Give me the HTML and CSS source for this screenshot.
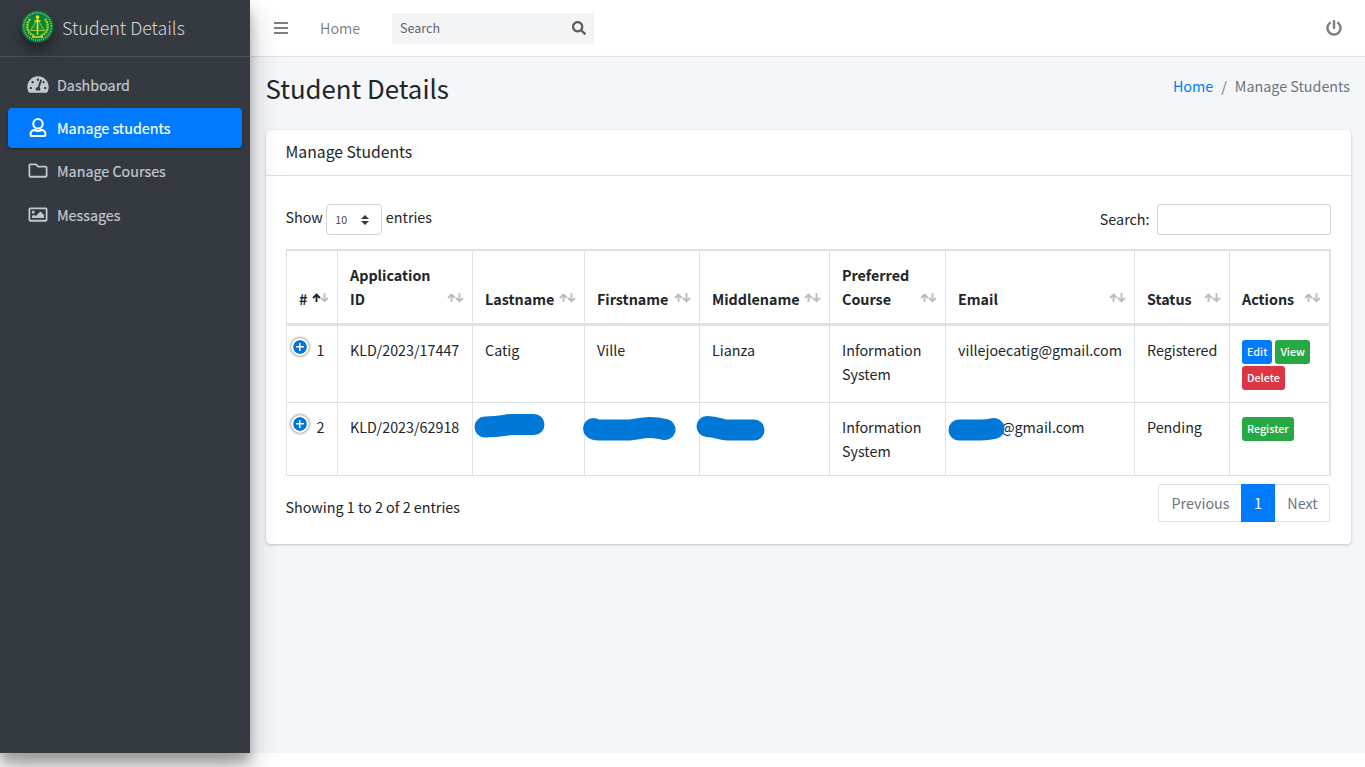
FILE: index.html
```html
<!DOCTYPE html>
<html lang="en">
<head>
<meta charset="utf-8">
<title>Student Details</title>
<link rel="stylesheet" href="styles.css">
</head>
<body>
<svg class="defs" width="0" height="0">
  <symbol id="sort" viewBox="0 0 17 10">
    <path class="up" d="M4.500 9V1.700M1 5L4.500 1.500L8 5" fill="none" stroke-width="1.900"/>
    <path class="down" d="M12.500 0V8M9 5L12.500 8.300L16 5" fill="none" stroke-width="1.900"/>
  </symbol>
</svg>
<div class="wrapper">
  <aside class="sidebar">
    <a class="brand">
      <svg class="logo" viewBox="0 0 33 33">
        <circle cx="16.500" cy="16.500" r="16" fill="#087a35"/>
        <circle cx="16.500" cy="16.500" r="13.700" fill="none" stroke="#8fbf95" stroke-width="1.800" stroke-dasharray="1 1.100"/>
        <circle cx="16.500" cy="16.500" r="11.500" fill="#078535"/>
        <path d="M9 9C4 15 6 24 14 26M24 9C29 15 27 24 19 26" fill="none" stroke="#a7cf24" stroke-width="2.400" stroke-dasharray="2 .6"/>
        <path d="M16.500 9L9.500 20.500H23.500Z" fill="#17913a" stroke="#9cc92a" stroke-width="1"/>
        <path d="M16.500 6V25M13.500 11H19.500M11 27H22" stroke="#e5df28" stroke-width="1.500"/>
        <circle cx="16.500" cy="7" r="1.800" fill="#f1df20"/>
      </svg>
      <span>Student Details</span>
    </a>
    <nav class="menu">
      <a class="item"><svg class="ico" viewBox="0 0 576 512"><path d="M288 32C128.940 32 0 160.940 0 320c0 52.800 14.250 102.260 39.060 144.800 5.610 9.620 16.300 15.200 27.440 15.200h443c11.140 0 21.830-5.580 27.440-15.200C561.750 422.260 576 372.800 576 320c0-159.060-128.940-288-288-288zm0 64c14.710 0 26.580 10.130 30.320 23.650-1.110 2.260-2.640 4.230-3.450 6.670l-9.220 27.670c-5.130 3.490-10.970 6.010-17.640 6.010-17.670 0-32-14.330-32-32S270.330 96 288 96zM96 384c-17.670 0-32-14.330-32-32s14.330-32 32-32 32 14.330 32 32-14.330 32-32 32zm48-160c-17.670 0-32-14.330-32-32s14.330-32 32-32 32 14.330 32 32-14.330 32-32 32zm246.770-72.410l-61.330 184C343.130 347.330 352 364.540 352 384c0 11.720-3.380 22.550-8.880 32H232.880c-5.500-9.450-8.880-20.280-8.880-32 0-33.940 26.500-61.430 59.900-63.590l61.340-184.010c4.170-12.560 17.730-19.450 30.360-15.170 12.570 4.190 19.350 17.790 15.170 30.360zm14.660 57.200l15.520-46.550c3.470-1.290 7.130-2.230 11.050-2.230 17.670 0 32 14.330 32 32s-14.330 32-32 32c-11.380-.01-21.250-6.090-26.570-15.210zM480 384c-17.670 0-32-14.330-32-32s14.330-32 32-32 32 14.330 32 32-14.330 32-32 32z"/></svg><span>Dashboard</span></a>
      <a class="item active"><svg class="ico user" viewBox="0 0 16 18" fill="none" stroke="#fff" stroke-width="2"><circle cx="8" cy="5.500" r="4.500"/><path d="M4.500 11.400C2.200 11.800 1 13.200 1 15.200V16Q1 17 2 17H14Q15 17 15 16V15.200C15 13.200 13.800 11.800 11.500 11.400C9.500 12.400 6.500 12.400 4.500 11.400Z"/></svg><span>Manage students</span></a>
      <a class="item"><svg class="ico" viewBox="0 0 512 512"><path d="M464 128H272l-54.630-54.630c-6-6-14.140-9.370-22.630-9.370H48C21.490 64 0 85.490 0 112v288c0 26.510 21.490 48 48 48h416c26.510 0 48-21.490 48-48V176c0-26.510-21.490-48-48-48zm0 272H48V112h140.120l54.630 54.630c6 6 14.140 9.370 22.630 9.370H464v224z"/></svg><span>Manage Courses</span></a>
      <a class="item messages"><svg class="ico" viewBox="0 0 512 512"><path d="M464 64H48C21.490 64 0 85.490 0 112v288c0 26.510 21.490 48 48 48h416c26.510 0 48-21.490 48-48V112c0-26.510-21.490-48-48-48zm-6 336H54a6 6 0 0 1-6-6V118a6 6 0 0 1 6-6h404a6 6 0 0 1 6 6v276a6 6 0 0 1-6 6zM128 152c-22.091 0-40 17.909-40 40s17.909 40 40 40 40-17.909 40-40-17.909-40-40-40zM96 352h320v-80l-87.515-87.515c-4.686-4.686-12.284-4.686-16.971 0L192 304l-39.515-39.515c-4.686-4.686-12.284-4.686-16.971 0L96 304v48z"/></svg><span>Messages</span></a>
    </nav>
  </aside>
  <div class="main">
    <header class="topbar">
      <svg class="bars" viewBox="0 0 14 12"><path d="M0 1H14M0 6H14M0 11H14" stroke="#808080" stroke-width="2"/></svg>
      <a class="home">Home</a>
      <div class="search"><span>Search</span>
        <svg viewBox="0 0 512 512"><path d="M505 442.700L405.300 343c-4.500-4.500-10.600-7-17-7H372c27.600-35.300 44-79.700 44-128C416 93.100 322.900 0 208 0S0 93.100 0 208s93.100 208 208 208c48.300 0 92.700-16.400 128-44v16.300c0 6.400 2.500 12.500 7 17l99.700 99.700c9.400 9.400 24.600 9.400 33.900 0l28.300-28.300c9.400-9.400 9.400-24.600.1-34zM208 336c-70.700 0-128-57.200-128-128 0-70.700 57.200-128 128-128 70.700 0 128 57.200 128 128 0 70.700-57.200 128-128 128z"/></svg>
      </div>
      <svg class="power" viewBox="0 0 512 512"><path d="M400 54.100c63 45 104 118.600 104 201.900 0 136.800-110.800 247.700-247.500 248C120 504.300 8.200 393 8 256.400 7.900 173.100 48.900 99.300 111.800 54.200c11.700-8.300 28-4.800 35 7.700L162.600 90c5.900 10.500 3.100 23.800-6.600 31-41.500 30.800-68 79.600-68 134.900-.1 92.300 74.500 168.100 168 168.100 91.600 0 168.600-74.200 168-169.100-.3-51.800-24.700-101.800-68.100-134-9.700-7.200-12.400-20.500-6.500-30.900l15.800-28.100c7-12.400 23.200-16.100 34.800-7.800zM296 264V24c0-13.300-10.700-24-24-24h-32c-13.300 0-24 10.700-24 24v240c0 13.300 10.700 24 24 24h32c13.300 0 24-10.700 24-24z"/></svg>
    </header>
    <div class="heading">
      <h1>Student Details</h1>
      <div class="crumbs"><a>Home</a><span class="sep">/</span><span>Manage Students</span></div>
    </div>
    <section class="card">
      <h2>Manage Students</h2>
      <div class="body">
        <div class="tools">
          <div class="length"><span>Show</span><span class="select">10<svg viewBox="0 0 8 10"><path d="M4 0L8 4H0ZM4 10L0 6H8Z"/></svg></span><span>entries</span></div>
          <label class="filter">Search:<input type="text"></label>
        </div>
        <table>
          <colgroup><col class="c1"><col class="c2"><col class="c3"><col class="c4"><col class="c5"><col class="c6"><col class="c7"><col class="c8"><col class="c9"></colgroup>
          <thead><tr>
            <th><div class="th asc">#<svg><use href="#sort"/></svg></div></th>
            <th><div class="th"><span>Application<br>ID</span><svg><use href="#sort"/></svg></div></th>
            <th><div class="th">Lastname<svg><use href="#sort"/></svg></div></th>
            <th><div class="th">Firstname<svg><use href="#sort"/></svg></div></th>
            <th><div class="th">Middlename<svg><use href="#sort"/></svg></div></th>
            <th><div class="th"><span>Preferred<br>Course</span><svg><use href="#sort"/></svg></div></th>
            <th><div class="th">Email<svg><use href="#sort"/></svg></div></th>
            <th><div class="th">Status<svg><use href="#sort"/></svg></div></th>
            <th><div class="th">Actions<svg><use href="#sort"/></svg></div></th>
          </tr></thead>
          <tbody>
            <tr class="r1">
              <td class="num"><i class="plus"></i>1</td><td>KLD/2023/17447</td><td>Catig</td><td>Ville</td><td>Lianza</td><td>Information System</td><td>villejoecatig@gmail.com</td><td>Registered</td>
              <td><div class="btns"><b class="btn blue">Edit</b><b class="btn green">View</b><b class="btn red">Delete</b></div></td>
            </tr>
            <tr class="r2">
              <td class="num"><i class="plus"></i>2</td><td>KLD/2023/62918</td>
              <td><svg class="mark m1" viewBox="0 0 71 25"><path d="M11 13C29 13 31 10.500 39 10.500H60" /></svg></td>
              <td><svg class="mark m2" viewBox="0 0 93 25"><path d="M10.500 12.500Q12 14 16 14H46C57 13 65 9 82 13.500"/></svg></td>
              <td><svg class="mark m3" viewBox="0 0 69 25"><path d="M11 10.500C22 11 25 14 31 14H58"/></svg></td>
              <td>Information System</td>
              <td class="mail"><svg class="mark m4" viewBox="0 0 57 25"><path d="M11 14H33Q39 14 46 12.500"/></svg>@gmail.com</td><td>Pending</td>
              <td><div class="btns"><b class="btn green">Register</b></div></td>
            </tr>
          </tbody>
        </table>
        <div class="foot">
          <span class="info">Showing 1 to 2 of 2 entries</span>
          <div class="pages"><a class="prev">Previous</a><a class="cur">1</a><a class="next">Next</a></div>
        </div>
      </div>
    </section>
  </div>
</div>
</body>
</html>
```
FILE: styles.css
```css
* { box-sizing: border-box; }
body {
  margin: 0;
  height: 767px;
  overflow: hidden;
  background: #fff;
  color: #212529;
  font: 14.32px/24px "Noto Sans CJK SC", "Noto Sans", sans-serif;
}
.defs { position: absolute; }
.wrapper { display: flex; height: 753px; background: #f4f6f9; }

.sidebar {
  position: relative;
  z-index: 2;
  width: 250px;
  flex: none;
  background: #343a40;
  box-shadow: 0 14px 28px rgba(0,0,0,.25), 0 10px 10px rgba(0,0,0,.22);
}
.brand {
  display: flex;
  align-items: center;
  gap: 8px;
  height: 57px;
  padding: 0 0 2px 21px;
  border-bottom: 1px solid #4b545c;
  color: rgba(255,255,255,.8);
  font-size: 17.91px;
  font-weight: 300;
}
.logo {
  width: 33px;
  height: 33px;
  margin-top: -2px;
  border-radius: 50%;
  box-shadow: 0 10px 20px rgba(0,0,0,.19), 0 6px 6px rgba(0,0,0,.23);
}
.menu { display: flex; flex-direction: column; gap: 3px; padding: 8px 8px; }
.item {
  display: flex;
  align-items: center;
  gap: 8px;
  height: 40px;
  padding-left: 19px;
  border-radius: 4px;
  color: #c2c7d0;
  -webkit-text-stroke: .2px currentColor;
}
.item.active {
  background: #007bff;
  color: #fff;
  box-shadow: 0 1px 3px rgba(0,0,0,.12), 0 1px 2px rgba(0,0,0,.24);
}
.item.messages { margin-top: 1px; }
.ico { width: 22px; height: 19px; fill: #c2c7d0; margin-top: -2px; }
.user { fill: none; }

.main { flex: 1; min-width: 0; }
.topbar {
  display: flex;
  align-items: center;
  height: 57px;
  padding: 0 23px 0 24px;
  background: #fff;
  border-bottom: 1px solid #dee2e6;
  color: rgba(0,0,0,.5);
}
.bars { width: 14px; height: 12px; }
.home { margin-left: 32px; width: 72px; }
.search {
  display: flex;
  align-items: center;
  justify-content: space-between;
  width: 202px;
  height: 31px;
  padding: 0 8px;
  border-radius: 3px;
  background: #f2f4f6;
  color: #5f656a;
  font-size: 12.54px;
}
.search svg { width: 14px; height: 14px; fill: #5c5c5d; }
.power { width: 16px; height: 16px; margin-left: auto; fill: #808080; }

.heading {
  display: flex;
  justify-content: space-between;
  height: 73px;
  padding: 13px 15px 0 15.500px;
}
h1 { margin: 0; font-size: 25.79px; line-height: 35px; font-weight: 400; }
.crumbs { display: flex; gap: 8px; padding-top: 4px; color: #6c757d; }
.crumbs a { color: #007bff; }

.card {
  height: 414px;
  margin: 0 14px 0 16px;
  border-radius: 4px;
  background: #fff;
  box-shadow: 0 0 1px rgba(0,0,0,.125), 0 1px 3px rgba(0,0,0,.2);
}
h2 {
  margin: 0;
  height: 46px;
  padding: 10px 19.500px;
  border-bottom: 1px solid #dfdfdf;
  font-size: 15.76px;
  line-height: 24px;
  font-weight: 400;
}
.body { padding: 28px 20px 0; }
.tools { display: flex; justify-content: space-between; height: 45px; }
.length { display: flex; gap: 3.500px; height: 31px; margin-left: -.5px; line-height: 26px; }
.select {
  display: flex;
  align-items: center;
  justify-content: space-between;
  width: 56px;
  height: 31px;
  padding: 0 12px 0 8px;
  border: 1px solid #ced4da;
  border-radius: 4px;
  color: #495057;
  font-size: 10.75px;
}
.select svg { width: 8px; height: 10px; fill: #343a40; }
.filter { display: flex; gap: 7.500px; height: 31px; line-height: 29px; }
.filter input {
  width: 174px;
  height: 31px;
  padding: 0;
  border: 1px solid #ced4da;
  border-radius: 3px;
  background: #fff;
}

table {
  width: 1045px;
  table-layout: fixed;
  border-collapse: separate;
  border-spacing: 0;
}
.c1 { width: 51px; } .c2 { width: 135px; } .c3 { width: 112px; }
.c4 { width: 115px; } .c5 { width: 130px; } .c6 { width: 116px; }
.c7 { width: 189px; } .c8 { width: 95px; } .c9 { width: 102px; }
th, td { border: 0 solid #dee2e6; border-left-width: 1px; text-align: left; }
th:last-child, td:last-child { border-right-width: 2px; }
th {
  height: 77px;
  padding: 0 8.500px 12px 12px;
  border-top-width: 2px;
  border-bottom-width: 3px;
  vertical-align: bottom;
  font-weight: 700;
}
.th { display: flex; justify-content: space-between; align-items: flex-end; }
.th svg { width: 17px; height: 10px; margin-bottom: 8px; flex: none; color: #bcbec0; stroke: #bcbec0; }
.th.asc svg { color: #212529; }
.up { stroke: currentColor; }
td { padding: 12px 8px 0 12px; border-bottom-width: 1px; vertical-align: top; }
.r1 td { height: 77px; }
.r2 td { height: 73px; }
.num { position: relative; padding-left: 29.500px; }
.plus {
  position: absolute;
  left: 4px;
  top: 12px;
  width: 18px;
  height: 18px;
  border-radius: 50%;
  border: 2px solid #fff;
  background:
    linear-gradient(#fff, #fff) center / 8px 1.500px no-repeat,
    linear-gradient(#fff, #fff) center / 1.500px 8px no-repeat,
    #0275d8;
  background-clip: padding-box;
  box-shadow: 0 0 3px #444;
}
.btns { display: flex; flex-wrap: wrap; gap: 2px 3px; padding-top: 2px; }
.btn {
  height: 24px;
  padding: 0 5px;
  border-radius: 3px;
  color: #fff;
  font-size: 10.75px;
  font-weight: 500;
  line-height: 24px;
}
.blue { background: #007bff; }
.green { background: #28a745; }
.red { background: #dc3545; }

/* brush strokes that cover private values */
.r2 td { position: relative; }
.mark { position: absolute; top: 11px; height: 25px; }
.mark path { fill: none; stroke: #0078d7; stroke-width: 21; stroke-linecap: round; stroke-linejoin: round; }
.m1 { left: 1px; width: 71px; }
.m2 { left: -2px; top: 13px; width: 93px; }
.m3 { left: -4px; top: 13px; width: 69px; }
.m4 { left: 2px; top: 13px; width: 57px; }
td.mail { padding-left: 55px; }

.foot { display: flex; justify-content: space-between; padding: 8px 1px 0 0; }
.info { margin-left: -.5px; padding-top: 11px; }
.pages { display: flex; height: 38px; line-height: 36px; color: #6c757d; }
.pages a { border: 1px solid #dee2e6; text-align: center; }
.pages .prev { width: 83px; padding-left: 1px; border-right: 0; border-radius: 4px 0 0 4px; }
.pages .cur { width: 34px; background: #007bff; border-color: #007bff; color: #fff; }
.pages .next { width: 55px; padding-left: 1px; border-left: 0; border-radius: 0 4px 4px 0; }
```
